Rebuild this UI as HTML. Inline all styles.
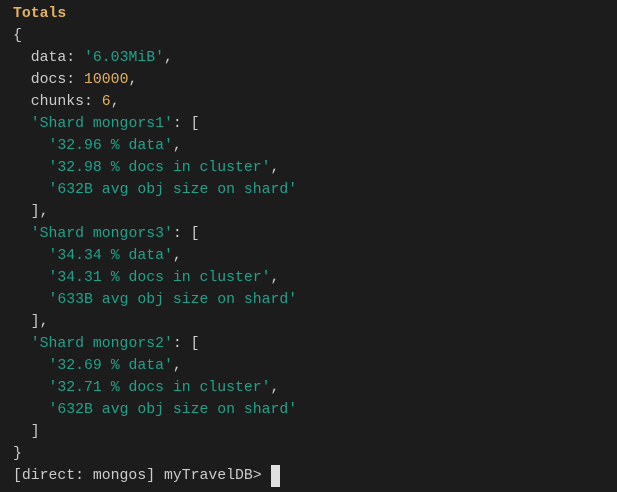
<!DOCTYPE html>
<html><head><style>
html,body{margin:0;background:#1c1c1c;width:617px;height:492px;overflow:hidden}
pre{margin:0;position:absolute;left:13px;top:3px;font-family:"Liberation Mono",monospace;font-size:14.8px;line-height:22px;color:#cccccc}
.s{color:#1fa38b}.n{color:#e5b35f}.t{color:#e5b35f;font-weight:bold}
.c{display:inline-block;width:9px;height:22px;background:#e0e0e0;vertical-align:top}
</style></head><body><pre><span class="t">Totals</span>
{
  data: <span class="s">'6.03MiB'</span>,
  docs: <span class="n">10000</span>,
  chunks: <span class="n">6</span>,
  <span class="s">'Shard mongors1'</span>: [
    <span class="s">'32.96 % data'</span>,
    <span class="s">'32.98 % docs in cluster'</span>,
    <span class="s">'632B avg obj size on shard'</span>
  ],
  <span class="s">'Shard mongors3'</span>: [
    <span class="s">'34.34 % data'</span>,
    <span class="s">'34.31 % docs in cluster'</span>,
    <span class="s">'633B avg obj size on shard'</span>
  ],
  <span class="s">'Shard mongors2'</span>: [
    <span class="s">'32.69 % data'</span>,
    <span class="s">'32.71 % docs in cluster'</span>,
    <span class="s">'632B avg obj size on shard'</span>
  ]
}
[direct: mongos] myTravelDB&gt; <span class="c"></span></pre></body></html>
